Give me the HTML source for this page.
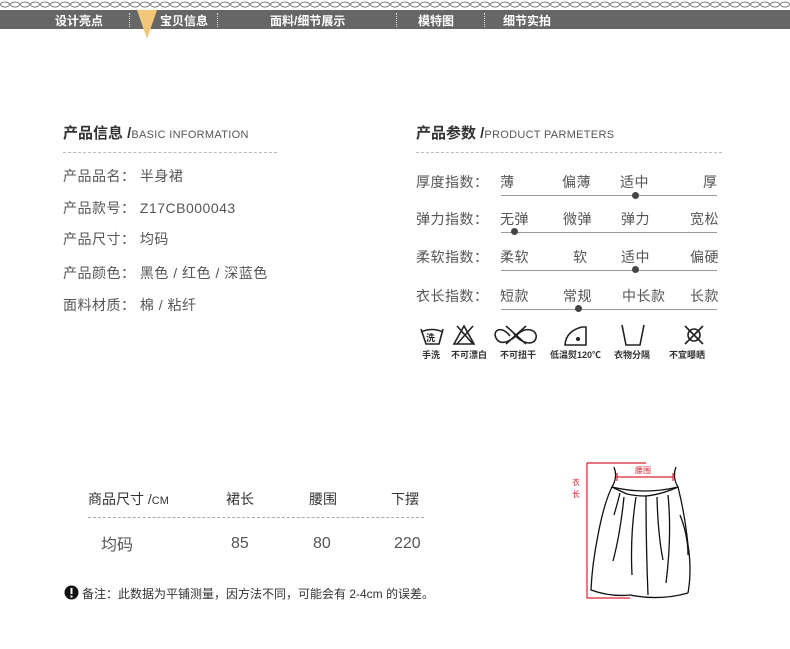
<!DOCTYPE html>
<html><head><meta charset="utf-8"><style>
*{margin:0;padding:0}
body{width:790px;height:649px;background:#fff;position:relative;overflow:hidden;font-family:"Liberation Sans","Noto Sans CJK SC",sans-serif;color:#555}
.a{position:absolute;white-space:nowrap}
.nav{position:absolute;left:0;top:10px;width:790px;height:19px;background:#666}
.nav span{position:absolute;top:2px;color:#fff;font-size:12px;font-weight:bold}
.sep{position:absolute;top:3px;height:14px;border-left:1px dotted #ddd}
.h{font-size:15px;font-weight:bold;color:#333}
.h small{font-size:11px;font-weight:normal;color:#555;letter-spacing:.3px}
.r{font-size:14px;color:#555;letter-spacing:.5px}
.ln{position:absolute;left:501px;width:216px;height:1px;background:#999}
.dot{position:absolute;width:7px;height:7px;border-radius:50%;background:#444}
.ic{font-size:9px;font-weight:bold;color:#333}
</style></head><body>
<svg class="a" style="left:0;top:0" width="790" height="9"><defs><pattern id="p" width="10" height="9" patternUnits="userSpaceOnUse"><ellipse cx="5" cy="4.5" rx="4.5" ry="2.5" fill="none" stroke="#777" stroke-width="1"/></pattern></defs><rect width="790" height="9" fill="url(#p)"/></svg>
<div class="nav">
<span style="left:55px">设计亮点</span>
<div class="sep" style="left:129px"></div>
<span style="left:160px">宝贝信息</span>
<div class="sep" style="left:217px"></div>
<span style="left:270px">面料/细节展示</span>
<div class="sep" style="left:396px"></div>
<span style="left:418px">模特图</span>
<div class="sep" style="left:484px"></div>
<span style="left:503px">细节实拍</span>
</div>
<svg class="a" style="left:137px;top:10px" width="20" height="30"><polygon points="0,0 20,0 10,29" fill="#f3c77a"/></svg>

<div class="a h" style="left:63px;top:122px">产品信息 /<small>BASIC INFORMATION</small></div>
<div class="a" style="left:63px;top:152px;width:214px;border-top:1px dashed #bbb"></div>
<div class="a r" style="left:63px;top:166px">产品品名： 半身裙</div>
<div class="a r" style="left:63px;top:198px">产品款号： Z17CB000043</div>
<div class="a r" style="left:63px;top:229px">产品尺寸： 均码</div>
<div class="a r" style="left:63px;top:263px">产品颜色： 黑色 / 红色 / 深蓝色</div>
<div class="a r" style="left:63px;top:295px">面料材质： 棉 / 粘纤</div>

<div class="a h" style="left:416px;top:122px">产品参数 /<small>PRODUCT PARMETERS</small></div>
<div class="a" style="left:416px;top:152px;width:306px;border-top:1px dashed #bbb"></div>

<div class="a r" style="left:416px;top:172px">厚度指数：</div>
<div class="a r" style="left:500px;top:172px">薄</div><div class="a r" style="left:562px;top:172px">偏薄</div><div class="a r" style="left:620px;top:172px">适中</div><div class="a r" style="left:703px;top:172px">厚</div>
<div class="ln" style="top:195px"></div><div class="dot" style="left:632px;top:192px"></div>

<div class="a r" style="left:416px;top:209px">弹力指数：</div>
<div class="a r" style="left:500px;top:209px">无弹</div><div class="a r" style="left:563px;top:209px">微弹</div><div class="a r" style="left:621px;top:209px">弹力</div><div class="a r" style="left:690px;top:209px">宽松</div>
<div class="ln" style="top:232px"></div><div class="dot" style="left:511px;top:228px"></div>

<div class="a r" style="left:416px;top:247px">柔软指数：</div>
<div class="a r" style="left:500px;top:247px">柔软</div><div class="a r" style="left:573px;top:247px">软</div><div class="a r" style="left:621px;top:247px">适中</div><div class="a r" style="left:690px;top:247px">偏硬</div>
<div class="ln" style="top:270px"></div><div class="dot" style="left:632px;top:266px"></div>

<div class="a r" style="left:416px;top:286px">衣长指数：</div>
<div class="a r" style="left:500px;top:286px">短款</div><div class="a r" style="left:563px;top:286px">常规</div><div class="a r" style="left:622px;top:286px">中长款</div><div class="a r" style="left:690px;top:286px">长款</div>
<div class="ln" style="top:309px"></div><div class="dot" style="left:575px;top:305px"></div>

<svg class="a" style="left:418px;top:322px" width="310" height="26" fill="none" stroke="#222" stroke-width="1.6">
<path d="M3 7 L8 22 H21 L25 7 M3 10 Q14 5 25 10"/><text x="8" y="19" font-size="9" font-weight="bold" fill="#222" stroke="none">洗</text>
<path d="M46 4 L36 22 H56 Z M39 4 L55 22 M55 4 L39 22"/>
<path d="M92 14 C84 3 74 8 78 16 C82 24 92 20 100 12 C108 4 120 8 118 16 C116 24 104 22 96 12 M88 4 L108 22 M108 4 L88 22"/>
<path d="M147 23 Q148 9 164 5 H168 V23 Z"/><circle cx="160" cy="17" r="1.2" fill="#222"/>
<path d="M204 3 L208 23 H222 L226 3"/>
<circle cx="276" cy="13" r="6"/><path d="M267 4 L285 22 M285 4 L267 22"/>
</svg>
<div class="a ic" style="left:422px;top:348px">手洗</div>
<div class="a ic" style="left:451px;top:348px">不可漂白</div>
<div class="a ic" style="left:500px;top:348px">不可扭干</div>
<div class="a ic" style="left:550px;top:348px">低温熨120℃</div>
<div class="a ic" style="left:614px;top:348px">衣物分隔</div>
<div class="a ic" style="left:669px;top:348px">不宜曝晒</div>

<div class="a" style="left:88px;top:489px;font-size:14px;color:#333">商品尺寸 /<span style="font-size:11px">CM</span></div>
<div class="a" style="left:226px;top:489px;font-size:14px;color:#333">裙长</div>
<div class="a" style="left:309px;top:489px;font-size:14px;color:#333">腰围</div>
<div class="a" style="left:391px;top:489px;font-size:14px;color:#333">下摆</div>
<div class="a" style="left:88px;top:517px;width:336px;border-top:1px dashed #aaa"></div>
<div class="a" style="left:101px;top:531px;font-size:16px">均码</div>
<div class="a" style="left:231px;top:535px;font-size:16px">85</div>
<div class="a" style="left:313px;top:535px;font-size:16px">80</div>
<div class="a" style="left:394px;top:535px;font-size:16px">220</div>

<svg class="a" style="left:64px;top:585px" width="15" height="15"><circle cx="7.5" cy="7.5" r="7" fill="#111"/><rect x="6.5" y="3" width="2" height="6" fill="#fff"/><rect x="6.5" y="10.5" width="2" height="2" fill="#fff"/></svg>
<div class="a" style="left:82px;top:585px;font-size:12px;color:#333">备注：此数据为平铺测量，因方法不同，可能会有 2-4cm 的误差。</div>

<svg class="a" style="left:560px;top:455px" width="135" height="150" fill="none">
<path d="M86 8 H27 V143 H70" stroke="#d23" stroke-width="1.2"/>
<path d="M57 22 H113 M57 18 V26 M113 18 V26" stroke="#d23" stroke-width="1.2"/>
<text x="75" y="18" font-size="8" fill="#d23">腰围</text>
<text x="12" y="30" font-size="8" fill="#d23">衣</text><text x="12" y="42" font-size="8" fill="#d23">长</text>
<g stroke="#111" stroke-width="1.3">
<path d="M54 12 Q58 22 52 32 Q85 40 118 32 Q112 22 116 12"/>
<path d="M52 32 Q44 48 38 80 Q32 110 31 135 Q50 142 70 140 Q100 146 128 138"/>
<path d="M118 32 Q125 60 128 90 Q132 115 128 138"/>
<path d="M52 32 Q60 36 67 39 Q76 41 85 41 Q100 40 118 32"/>
<path d="M60 38 Q57 50 54 60 M64 42 Q60 80 53 106 M76 42 Q70 80 72 120 M97 42 Q98 80 103 105 M108 40 Q112 80 106 128 M86 41 Q86 90 88 140 M120 60 Q128 80 128 100"/>
</g></svg>
</body></html>
